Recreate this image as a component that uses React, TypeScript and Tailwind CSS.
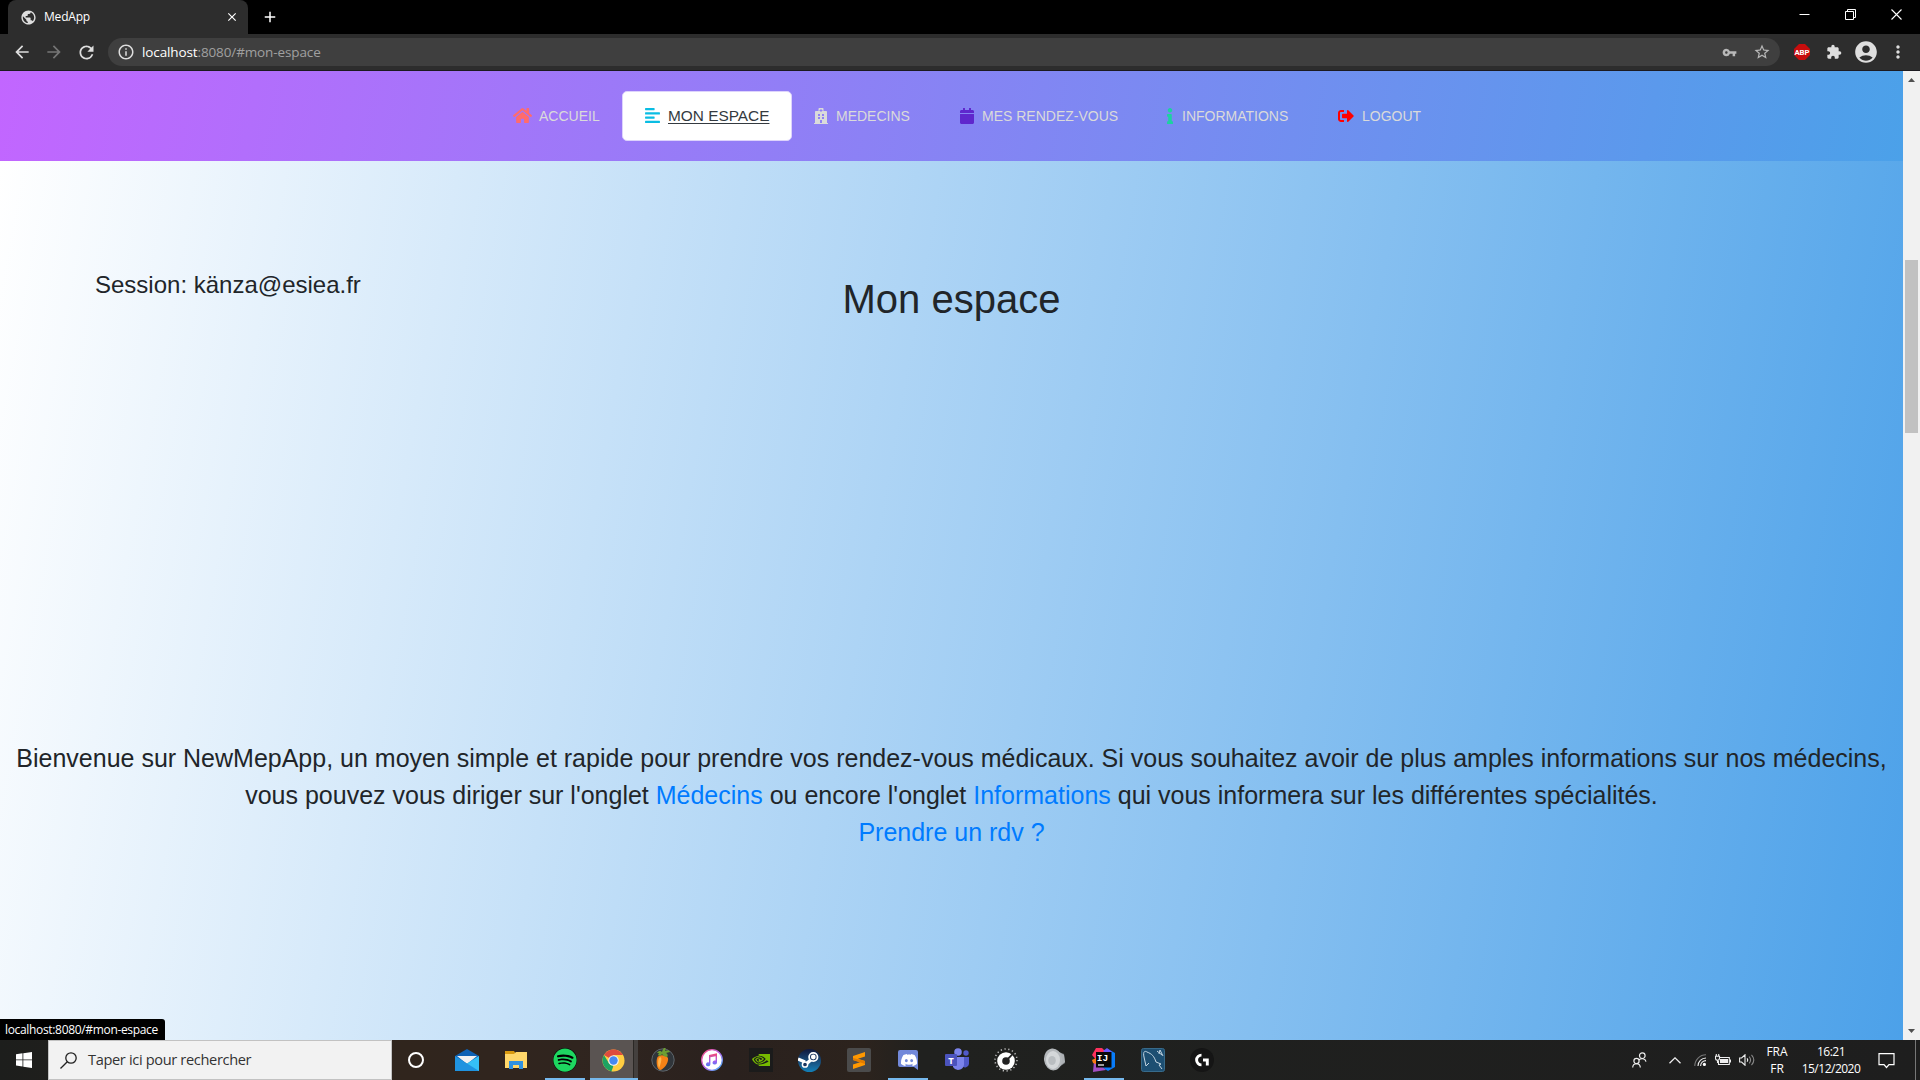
import React from "react";
import {
  FaHome, FaAlignLeft, FaHospital, FaCalendar, FaInfo, FaSignOutAlt, FaSpotify,
} from "react-icons/fa";
import { SiNvidia, SiDiscord } from "react-icons/si";
import {
  MdArrowBack, MdArrowForward, MdRefresh, MdInfoOutline, MdVpnKey, MdStarBorder, MdExtension,
  MdAccountCircle, MdMoreVert, MdPublic, MdClose, MdAdd,
} from "react-icons/md";

function TitleBar() {
  return (
    <div className="relative flex h-[34px] bg-black text-white">
      <div className="ml-2 flex h-[34px] w-60 items-center rounded-t-[8px] bg-[#2d2d2d] pr-[9px] pl-3">
        <MdPublic className="size-[17px] text-[#dedede]" />
        <span className="ml-[7px] text-[12px] tracking-[-0.2px]">MedApp</span>
        <MdClose className="ml-auto size-[14px]" />
      </div>
      <MdAdd className="mt-[8px] ml-[13px] size-[18px]" />
      <div className="ml-auto flex h-[28px] items-center">
        <svg className="mr-[35px] size-[11px]" viewBox="0 0 11 11" stroke="#fff"><path d="M0.5 5.5H10.5" /></svg>
        <svg className="mr-[35px] size-[11px]" viewBox="0 0 11 11" stroke="#fff" fill="none"><path d="M0.5 2.5h8v8h-8zM2.5 2.5v-2h8v8h-2" /></svg>
        <svg className="mr-[18px] size-[11px]" viewBox="0 0 11 11" stroke="#fff" strokeWidth="1.1"><path d="M.5 .5l10 10M10.5 .5l-10 10" /></svg>
      </div>
    </div>
  );
}

function Toolbar() {
  return (
    <div className="flex h-[37px] items-center border-b border-[#1c1a20] bg-[#2d2d2d] text-[#dedede]">
      <MdArrowBack className="ml-3 size-5" />
      <MdArrowForward className="ml-3 size-5 text-[#757575]" />
      <MdRefresh className="ml-3 size-[21px]" />
      <div className="ml-[11px] flex h-7 w-[1672px] items-center rounded-full bg-[#3f3f3f] pr-[9px] pl-[9px]">
        <MdInfoOutline className="size-[18px]" />
        <span className="ml-[7px] text-[13.5px] tracking-[-0.12px] whitespace-nowrap text-[#a0a0a0]">
          <span className="text-white">localhost</span>:8080/#mon-espace
        </span>
        <MdVpnKey className="ml-auto size-[15px] text-[#b8b8b8]" />
        <MdStarBorder className="ml-4 size-[18px] text-[#b8b8b8]" />
      </div>
      <svg className="ml-[14px] h-4 w-4" viewBox="0 0 16 16">
        <path d="M5 0h6l5 5v6l-5 5H5l-5-5V5z" fill="#c70d0d" />
        <text x="8" y="10.8" fontSize="7.8" fontWeight="700" fill="#fff" textAnchor="middle" fontFamily="Roboto, sans-serif">ABP</text>
      </svg>
      <MdExtension className="ml-4 size-4" />
      <MdAccountCircle className="ml-[11px] size-[26px]" />
      <MdMoreVert className="ml-[9px] size-5" />
    </div>
  );
}

function NavItem({ icon, label, className }: { icon: React.ReactNode; label: string; className: string }) {
  return (
    <a className={"flex items-center whitespace-nowrap text-[14px] text-[#dadada] " + className}>
      {icon}
      <span className="pt-px">{label}</span>
    </a>
  );
}

function NavBar() {
  return (
    <nav className="flex h-[90px] items-center bg-[linear-gradient(100deg,#c266ff,#4ba1e9)] font-['Liberation_Sans',Arial,sans-serif]">
      <NavItem className="ml-[513px] w-[109px]" label="ACCUEIL" icon={<FaHome className="mr-[7px] size-[19px] -translate-y-px text-[#ff6b6b]" />} />
      <a className="flex h-[50px] w-[170px] items-center rounded-[5px] border border-[#ddd3fc] bg-white pl-[21px] text-[15.4px] whitespace-nowrap text-[#343a40]">
        <FaAlignLeft className="mr-[7px] size-[17px] -translate-y-px text-[#0abde3]" />
        <span className="underline underline-offset-2">MON ESPACE</span>
      </a>
      <NavItem className="ml-[21px] w-[147px]" label="MEDECINS" icon={<FaHospital className="mr-[7px] h-4 w-4 text-[#dadada]" />} />
      <NavItem className="-ml-px w-[208px]" label="MES RENDEZ-VOUS" icon={<FaCalendar className="mr-[7px] h-4 w-4 text-[#5f27cd]" />} />
      <NavItem className="w-[171px]" label="INFORMATIONS" icon={<FaInfo className="mr-[4px] -ml-[5px] h-4 w-4 text-[#1dd1a1]" />} />
      <NavItem className="" label="LOGOUT" icon={<FaSignOutAlt className="mr-[8px] h-4 w-4 text-[#ff0000]" />} />
    </nav>
  );
}

function Page() {
  return (
    <div className="flex h-[969px]">
      <div className="w-[1903px]">
        <NavBar />
        <main className="relative flex h-[879px] flex-col bg-[linear-gradient(100deg,#ffffff,#4ca1e9)] font-['Liberation_Sans',Arial,sans-serif] text-[24px] text-[#212529]">
          <div className="grid h-[570px] grid-cols-3 pt-[106px]">
            <p className="pl-[95px] leading-9">Session: känza@esiea.fr</p>
            <h1 className="pt-[8px] text-center text-[40px] leading-[48px]">Mon espace</h1>
          </div>
          <p className="pt-[9px] text-center text-[25px] leading-[37px] whitespace-nowrap">
            Bienvenue sur NewMepApp, un moyen simple et rapide pour prendre vos rendez-vous médicaux. Si vous souhaitez avoir de plus amples informations sur nos médecins,
            <br />
            vous pouvez vous diriger sur l'onglet <a className="text-[#007bff]">Médecins</a> ou encore l'onglet <a className="text-[#007bff]">Informations</a> qui vous informera sur les différentes spécialités.
            <br />
            <a className="text-[#007bff]">Prendre un rdv ?</a>
          </p>
          <div className="absolute bottom-0 left-0 h-[21px] w-[165px] rounded-tr-[3px] bg-black pl-[5px] font-['Open_Sans','Noto_Sans',sans-serif] text-[12px] leading-[21px] tracking-[-0.33px] whitespace-nowrap text-white">
            localhost:8080/#mon-espace
          </div>
        </main>
      </div>
      <div className="flex w-[17px] flex-col items-center bg-[#f1f1f1]">
        <svg className="mt-[7px] h-[4px] w-[7px]" viewBox="0 0 7 4"><path d="M0 4L3.5 0L7 4z" fill="#505050" /></svg>
        <div className="mt-[178px] h-[173px] w-[13px] bg-[#c1c1c1]" />
        <svg className="mt-auto mb-[7px] h-[4px] w-[7px]" viewBox="0 0 7 4"><path d="M0 0L3.5 4L7 0z" fill="#505050" /></svg>
      </div>
    </div>
  );
}

function Slot({ children, open = false, active = false }: { children: React.ReactNode; open?: boolean; active?: boolean }) {
  return (
    <div className="relative flex h-10 w-[49.05px] items-center justify-center">
      {active && (
        <div className="absolute top-0 left-[1px] flex h-10 w-12 border-b-2 border-[#76b9ed] bg-[#44403e]">
          <div className="h-full w-11 border-r border-[#2b2825] bg-[#5a5452]" />
        </div>
      )}
      <div className="relative flex">{children}</div>
      {open && <div className="absolute bottom-0 left-[4.5px] h-[2px] w-10 bg-[#76b9ed]" />}
    </div>
  );
}

const MailIcon = () => (
  <svg className="h-6 w-6" viewBox="0 0 24 24">
    <path d="M0 8L12 1l12 7v6H0z" fill="#0f62b5" />
    <path d="M2 8h20l-10 8z" fill="#f2f2f2" />
    <path d="M24 8L0 23h24z" fill="#35c0f6" />
    <path d="M0 8l24 15H0z" fill="#1f93e0" />
  </svg>
);

const FolderIcon = () => (
  <svg className="h-[22px] w-[22px]" viewBox="0 0 22 22">
    <path d="M0 2h9l2 3h11v14H0z" fill="#d99a10" />
    <path d="M0 5h9l2-2h11v16H0z" fill="#ffd76a" />
    <path d="M4 20v-8h14v8h-4v-4H8v4z" fill="#2f91e0" />
  </svg>
);

const ChromeIcon = () => (
  <svg className="h-[23px] w-[23px]" viewBox="0 0 48 48">
    <circle cx="24" cy="24" r="23" fill="#ffcd41" />
    <path d="M24 24L4.1 12.5A23 23 0 0 1 43.9 12.5H24z" fill="#dd4b3e" />
    <path d="M4.1 12.5L14.5 29.5L24 35l-1 12A23 23 0 0 1 4.1 12.5z" fill="#1da362" />
    <path d="M24 35l9.5-5.5L23 47l-3-1z" fill="#ffcd41" />
    <circle cx="24" cy="24" r="11" fill="#f4f4f4" />
    <circle cx="24" cy="24" r="8.8" fill="#4688f1" />
  </svg>
);

const FruitIcon = () => (
  <svg className="h-6 w-6" viewBox="0 0 24 24">
    <circle cx="12" cy="12" r="11.2" fill="#30353a" stroke="#5e656a" />
    <path d="M6.5 9c3-3 9-2 10.500 1 1 5-5 12-8 12S4.500 13 6.500 9z" fill="#f58216" />
    <path d="M8 10c2-2 3 0 2 4s-2 6-2 6-2-6 0-10z" fill="#ffb54d" />
    <path d="M6 5c2-3 4-2 5-1 1-4 3-5 4-5l-1 4c3-2 5 0 5 1l-4 1c2 1 2 3 1 4-2 0-4-1-5-3-1 2-3 2-4 1l1-2z" fill="#6d9e32" />
  </svg>
);

const MusicIcon = () => (
  <svg className="h-[22px] w-[22px]" viewBox="0 0 22 22">
    <defs>
      <linearGradient id="ring" x1="0" y1="0" x2="1" y2="1"><stop stopColor="#ff4f7b" /><stop offset=".5" stopColor="#b967f0" /><stop offset="1" stopColor="#39b9f6" /></linearGradient>
      <linearGradient id="note" x1="0" y1="0" x2="0" y2="1"><stop stopColor="#f9486f" /><stop offset=".6" stopColor="#a15cf0" /><stop offset="1" stopColor="#4a83f2" /></linearGradient>
    </defs>
    <circle cx="11" cy="11" r="10.3" fill="#fff" stroke="url(#ring)" strokeWidth="1.3" />
    <path d="M8 6l8-1.7v9.2a2.2 2 0 1 1-1.4-1.9V7.3l-5.2 1v7a2.2 2 0 1 1-1.4-1.9z" fill="url(#note)" />
  </svg>
);

const SteamIcon = () => (
  <svg className="size-[23px]" viewBox="0 0 23 23">
    <path d="M0 10l7 3M7 16l8-7" stroke="#fff" strokeWidth="3.4" />
    <circle cx="15.3" cy="8" r="4.2" fill="#17335e" stroke="#fff" strokeWidth="1.8" />
    <circle cx="15.3" cy="8" r="2.4" fill="#fff" />
    <circle cx="7" cy="15.5" r="2.6" fill="#17335e" stroke="#fff" strokeWidth="1.5" />
  </svg>
);

const SublimeIcon = () => (
  <svg className="h-6 w-6" viewBox="0 0 24 24">
    <rect width="24" height="24" rx="2" fill="#4b4b4b" />
    <path d="M18 4v4.5l-7 2.3 7 2.2v4L6 21v-4.5l7-2.3-7-2.2V8z" fill="#ff9800" />
    <path d="M6 12v-2l12 3v3z" fill="#e27c00" />
  </svg>
);

const DiscordIcon = () => (
  <svg className="h-[22px] w-5" viewBox="0 0 20 22">
    <path d="M2 1h16a2 2 0 0 1 2 2v18l-4-3H2a2 2 0 0 1-2-2V3a2 2 0 0 1 2-2z" fill="#7289da" />
    <SiDiscord x="3" y="3" width="14" height="14" color="#fff" />
  </svg>
);

const TeamsIcon = () => (
  <svg className="h-6 w-6" viewBox="0 0 24 24">
    <circle cx="21" cy="5" r="2.7" fill="#5059c9" />
    <path d="M16 9h8v7a4 4 0 0 1-7 2z" fill="#5059c9" />
    <circle cx="13" cy="4" r="3.8" fill="#7b83eb" />
    <path d="M8 9h11v8a6 6 0 0 1-11 2z" fill="#7b83eb" />
    <rect y="6" width="12" height="12" rx="1" fill="#4b53bc" />
    <text x="6" y="15.5" textAnchor="middle" fontSize="9.5" fontWeight="700" fill="#fff" fontFamily="Open Sans, sans-serif">T</text>
  </svg>
);

const DialIcon = () => (
  <svg className="h-6 w-6" viewBox="0 0 24 24">
    <circle cx="12" cy="12" r="11" fill="none" stroke="#bbb" strokeWidth="1.5" strokeDasharray="1.3 2.54" />
    <circle cx="12" cy="13" r="8.8" fill="#fff" />
    <circle cx="12" cy="13" r="3.8" fill="#222" />
    <path d="M12.500 11l5.500-5.500 1.200 1.200-5 5.300z" fill="#222" />
  </svg>
);

const SpeakerIcon = () => (
  <svg className="h-6 w-6" viewBox="0 0 24 24">
    <path d="M8 1l13 5 1 9-10 7z" fill="#777c80" />
    <path d="M16 4l5 3 1 7-5 4z" fill="#aeb2b5" />
    <ellipse cx="10" cy="11.5" rx="9" ry="11" fill="#b4b8bb" transform="rotate(-6 9 11.5)" />
    <ellipse cx="10" cy="12" rx="7" ry="9" fill="#d4d7d9" />
    <ellipse cx="9" cy="12.500" rx="3.800" ry="4.500" fill="#b9bdc0" />
  </svg>
);

const IdeaIcon = () => (
  <svg className="h-6 w-6" viewBox="0 0 24 24">
    <path d="M16 1l7 4v14l-7 4-8-5z" fill="#087cfa" />
    <path d="M4 0h6l4 4-8 10-6-7z" fill="#fe315d" />
    <path d="M2 13l4 2 8 7-13 2z" fill="#a34fc4" />
    <path d="M0 12l4-2v6l-3-1z" fill="#f97a12" />
    <path d="M11 3l4-3 5 4-4 3z" fill="#6b57ff" />
    <rect x="4" y="4" width="15.5" height="15.5" fill="#080808" />
    <path d="M6 17h6" stroke="#fff" strokeWidth="1.2" />
    <text x="4.800" y="13.200" fontSize="9.500" fontWeight="700" fill="#fff" fontFamily="Liberation Mono, monospace">IJ</text>
  </svg>
);

const DolphinIcon = () => (
  <svg className="h-6 w-6" viewBox="0 0 24 24" fill="none" stroke="#c5d6e2">
    <rect x=".5" y=".5" width="23" height="23" rx="2" fill="#1d4f72" stroke="#386b8b" />
    <path d="M5 18L3 9C2 5 3 2 6 4c5 2 7 4 9 10l5 2-2 1 3 4M5 18l3-3" />
    <path d="M16 3l5 4M18 6l1-4 3 6" />
  </svg>
);

const LogiIcon = () => (
  <svg className="h-6 w-6" viewBox="0 0 24 24" fill="none" stroke="#fff" strokeWidth="2.9">
    <circle cx="12" cy="12" r="12" fill="#151515" stroke="none" />
    <path d="M11.5 7.1a4.9 4.9 0 1 0 0 9.8M13 12h4.3v5.5" />
  </svg>
);

function Taskbar() {
  return (
    <footer className="flex h-10 items-center bg-[linear-gradient(90deg,#1d1e1c_0%,#211f1c_7%,#30251d_21%,#30251f_30%,#2a211e_38%,#2c231d_45%,#20211f_48%,#1e1e1e_100%)] text-white">
      <div className="flex w-12 justify-center">
        <svg className="h-4 w-4" viewBox="0 0 16 16" fill="#fff"><path d="M0 2.3L6.5 1.3V7.5H0zM7.3 1.2L16 0V7.5H7.3zM0 8.3H6.5v6.2L0 13.6zM7.3 8.3H16V16L7.3 14.7z" /></svg>
      </div>
      <div className="flex h-10 w-[344px] items-center border border-[#c2c2c2] bg-[#f2f2f2] pl-[11px] text-[#333]">
        <svg className="h-[17px] w-[17px]" viewBox="0 0 17 17" fill="none" stroke="#222" strokeWidth="1.3"><circle cx="11" cy="6" r="5.2" /><path d="M7.3 9.7L.5 16.5" /></svg>
        <span className="ml-[11px] text-[14.600px] tracking-[-0.350px]">Taper ici pour rechercher</span>
      </div>
      <div className="flex">
        <div className="mr-px flex h-10 w-12 items-center justify-center"><div className="size-4 rounded-full border-[2.500px] border-white" /></div>
        <div className="ml-px flex">
          <Slot><MailIcon /></Slot>
          <Slot><FolderIcon /></Slot>
          <Slot open><div className="rounded-full bg-black"><FaSpotify className="size-6 text-[#1ed760]" /></div></Slot>
          <Slot active><ChromeIcon /></Slot>
          <Slot><FruitIcon /></Slot>
          <Slot><MusicIcon /></Slot>
          <Slot><div className="flex size-6 items-center justify-center bg-[#1b1b1b]"><SiNvidia className="size-[18px] text-[#76b900]" /></div></Slot>
          <Slot><div className="rounded-full bg-gradient-to-b from-[#10183c] to-[#1180b8]"><SteamIcon /></div></Slot>
          <Slot><SublimeIcon /></Slot>
          <Slot open><DiscordIcon /></Slot>
          <Slot><TeamsIcon /></Slot>
          <Slot><DialIcon /></Slot>
          <Slot><SpeakerIcon /></Slot>
          <Slot open><IdeaIcon /></Slot>
          <Slot><DolphinIcon /></Slot>
          <Slot><LogiIcon /></Slot>
        </div>
      </div>
      <Tray />
    </footer>
  );
}

function Tray() {
  return (
    <div className="ml-auto flex h-10 items-center text-[12px]">
      <svg className="h-4 w-[15px]" viewBox="0 0 15 16" fill="none" stroke="#eee" strokeWidth="1.2"><circle cx="10.3" cy="3.7" r="2.8" /><path d="M6.8 8.2c2-2.4 6.5-2 7.2 1.4" /><circle cx="4.5" cy="9" r="2.6" /><path d="M.7 15.5c.2-5 7.4-5 7.6 0" /></svg>
      <svg className="ml-[22px] h-[7px] w-3" viewBox="0 0 12 7" fill="none" stroke="#eee" strokeWidth="1.3"><path d="M.5 6.3L6 .9l5.5 5.4" /></svg>
      <svg className="ml-[13px] h-3 w-3" viewBox="0 0 12 12" fill="none" stroke="#eee" strokeWidth="1.1"><path d="M6.6 12A5.4 5.4 0 0 1 12 6.6M4 12a8 8 0 0 1 8-8" /><path d="M.8 12A11.2 11.2 0 0 1 12 .8" stroke="#777" /><circle cx="10.4" cy="10.4" r="1.6" fill="#fff" stroke="none" /></svg>
      <svg className="ml-[9px] h-3 w-4" viewBox="0 0 16 12" fill="none" stroke="#eee" strokeWidth="1.1"><path d="M4.5 3.5h9.8v7H3.5V7M15.5 5.5v3M1.3 0v2M3.7 0v2M.5 2.3h4v2a2 2 0 0 1-4 0zM2.5 6v3" /><rect x="5" y="5" width="8" height="4" fill="#eee" stroke="none" /></svg>
      <svg className="ml-2 h-3 w-4" viewBox="0 0 16 12" fill="none" stroke="#eee" strokeWidth="1.1"><path d="M.6 4h2L6 .8v10.4L2.6 8h-2zM8 4.3q1.4 1.7 0 3.4" /><path d="M10.2 2.6q2.800 3.400 0 6.800M12.500 .8q4.600 5.200 0 10.400" stroke="#888" /></svg>
      <div className="ml-[10px] w-[24px] text-center leading-[17px]">FRA<br />FR</div>
      <div className="ml-[11px] w-[62px] text-center leading-[17px] tracking-[-0.500px] whitespace-nowrap">16:21<br />15/12/2020</div>
      <svg className="ml-4 h-[17px] w-[17px]" viewBox="0 0 17 17" fill="none" stroke="#fff" strokeWidth="1.2"><path d="M1 1.6h15v11h-5L8.5 15.5 6 12.6H1z" /></svg>
      <div className="ml-[20px] h-10 w-[5px] border-l border-[#777]" />
    </div>
  );
}

export default function App() {
  return (
    <div className="h-[1080px] w-[1920px] overflow-hidden bg-black font-['Open_Sans','Noto_Sans',sans-serif]">
      <TitleBar />
      <Toolbar />
      <Page />
      <Taskbar />
    </div>
  );
}
